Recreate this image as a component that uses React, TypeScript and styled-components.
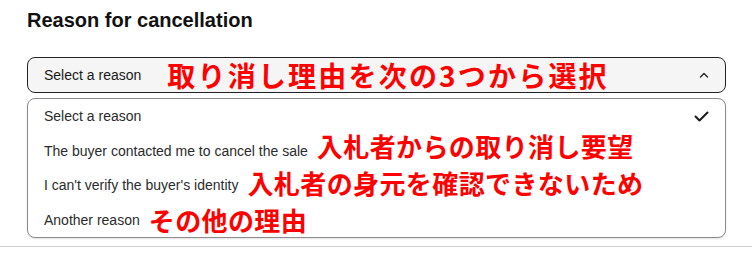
import styled, { createGlobalStyle } from 'styled-components';

const GlobalStyle = createGlobalStyle`
  html, body {
    margin: 0;
    padding: 0;
    background: #fff;
  }
  body {
    font-family: "Liberation Sans", Arial, sans-serif;
  }
`;

const options = [
	{ label: 'Select a reason', note: '', lift: 0, selected: true },
	{ label: 'The buyer contacted me to cancel the sale', note: '入札者からの取り消し要望', lift: 5, selected: false },
	{ label: "I can't verify the buyer's identity", note: '入札者の身元を確認できないため', lift: 2, selected: false },
	{ label: 'Another reason', note: 'その他の理由', lift: 0, selected: false },
];

const ChevronUp = () => (
	<svg width='10' height='6' viewBox='0 0 10 6' fill='none'>
		<path d='M1.5 5L5 1.5L8.5 5' stroke='#222' strokeWidth='1.4' strokeLinecap='round' strokeLinejoin='round' />
	</svg>
);

const Check = () => (
	<svg width='15' height='11' viewBox='0 0 15 11' fill='none'>
		<path d='M1.5 5.5L5.5 9.5L13.5 1.5' stroke='#1a1a1a' strokeWidth='2' strokeLinecap='round' strokeLinejoin='round' />
	</svg>
);

export default function App() {
	return (
		<>
			<GlobalStyle />
			<StyledPage>
				<StyledSection>
					<StyledTitle>Reason for cancellation</StyledTitle>
					<StyledSelect>
						<StyledLabel>
							<StyledValue>Select a reason</StyledValue>
							<StyledNote $big>取り消し理由を次の3つから選択</StyledNote>
						</StyledLabel>
						<ChevronUp />
					</StyledSelect>
					<StyledList>
						{options.map((o) => (
							<StyledOption key={o.label}>
								<StyledLabel>
									<StyledOptionText>{o.label}</StyledOptionText>
									{o.note && <StyledNote $lift={o.lift}>{o.note}</StyledNote>}
								</StyledLabel>
								{o.selected && <Check />}
							</StyledOption>
						))}
					</StyledList>
				</StyledSection>
				<StyledRule />
			</StyledPage>
		</>
	);
}

const StyledPage = styled.div`
    width: 752px;
    height: 259px;
    overflow: hidden;
`;

const StyledSection = styled.div`
    padding: 8px 26px 0 27px;
`;

const StyledTitle = styled.h2`
    margin: 0 0 25px;
    font-size: 20px;
    line-height: 24px;
    font-weight: 700;
    color: #111;
`;

const StyledSelect = styled.div`
    box-sizing: border-box;
    height: 36px;
    display: flex;
    align-items: center;
    justify-content: space-between;
    padding: 0 16px 0 16px;
    border: 1px solid #222;
    border-radius: 8px;
    background: #f5f5f5;
`;

const StyledLabel = styled.div`
    display: flex;
    align-items: center;
    white-space: nowrap;
`;

const StyledValue = styled.span`
    font-size: 14px;
    color: #191919;
`;

const StyledList = styled.div`
    margin-top: 5px;
    border: 1px solid #8c8c8c;
    border-radius: 8px;
    box-shadow: 0 1px 2px rgba(0, 0, 0, 0.12);
    background: #fff;
`;

const StyledOption = styled.div`
    height: 34.5px;
    display: flex;
    align-items: center;
    justify-content: space-between;
    padding: 0 16px;
`;

const StyledOptionText = styled.span`
    font-size: 14px;
    color: #2b2b2b;
`;

const StyledNote = styled.span<{ $big?: boolean; $lift?: number }>`
    margin-left: ${(p) => (p.$big ? 26 : 9)}px;
    font-family: "Noto Sans CJK JP", "Noto Sans", sans-serif;
    font-weight: 700;
    font-size: ${(p) => (p.$big ? 28 : 26)}px;
    letter-spacing: ${(p) => (p.$big ? 2.2 : 0.4)}px;
    line-height: 1;
    color: #ff0000;
    position: relative;
    top: ${(p) => -(p.$lift || 0)}px;
`;

const StyledRule = styled.div`
    margin-top: 8px;
    height: 1px;
    background: #cfcfcf;
`;
